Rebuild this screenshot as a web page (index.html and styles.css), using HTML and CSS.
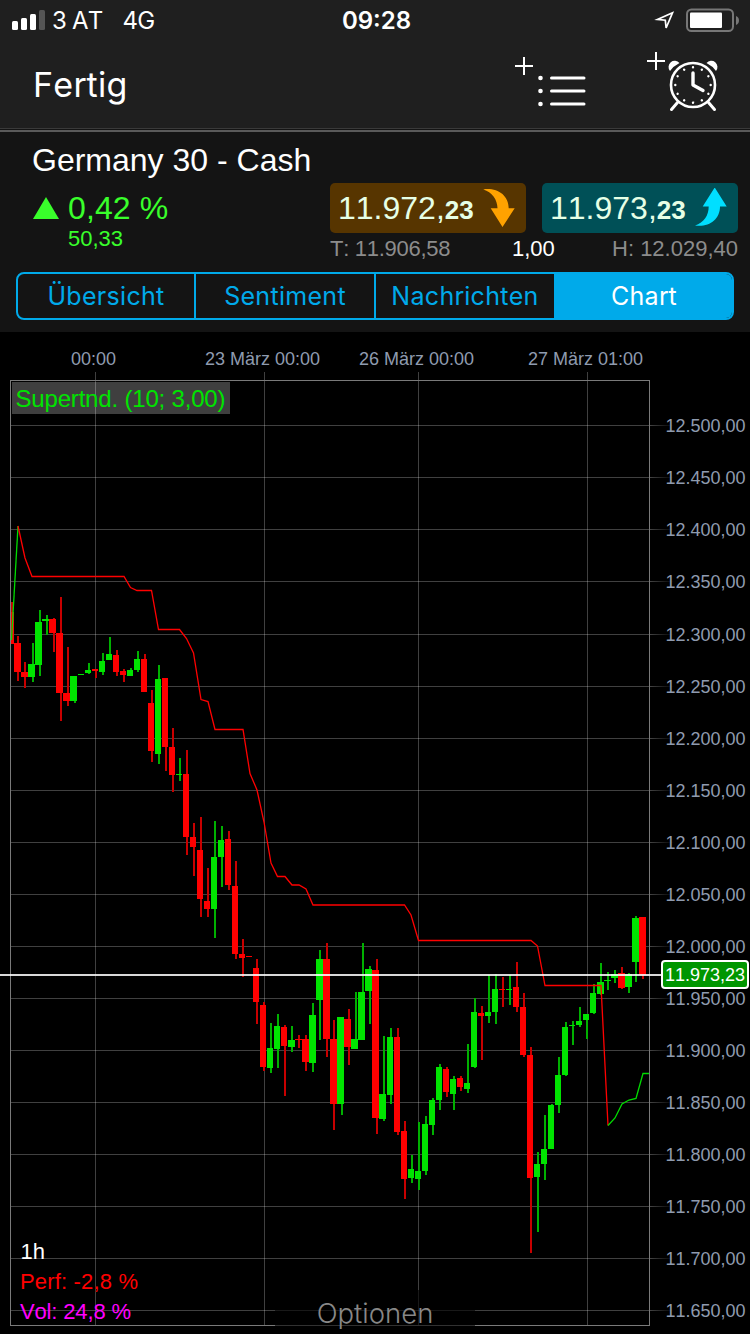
FILE: index.html
```html
<!DOCTYPE html>
<html lang="de">
<head>
    <meta charset="UTF-8">
    <meta name="viewport" content="width=device-width, initial-scale=1.0">
    <title>Germany 30 - Cash</title>
    <link rel="stylesheet" href="styles.css">
</head>
<body>
    <div class="status-bar">
        <div class="status-left">
            <svg class="signal" width="34" height="22" viewBox="0 0 34 22">
                <rect x="0" y="12" width="6" height="9" rx="1.5"/>
                <rect x="9" y="9" width="6" height="12" rx="1.5"/>
                <rect x="18" y="5" width="6" height="16" rx="1.5"/>
                <rect class="off" x="27" y="1" width="6" height="20" rx="1.5"/>
            </svg>
            <span class="carrier">3 AT</span>
            <span class="network">4G</span>
        </div>
        <div class="clock">09:28</div>
        <div class="status-right">
            <svg class="location" width="22" height="22" viewBox="0 0 22 22">
                <path d="M19.5 3.8 4.5 10.4 12.3 11.2 13.1 19Z"/>
            </svg>
            <svg class="battery" width="54" height="24" viewBox="0 0 54 24">
                <rect class="case" x="1" y="1.500" width="46" height="21.5" rx="4.5"/>
                <rect class="level" x="4" y="4.500" width="32" height="15.500" rx="1"/>
                <path class="cap" d="M50 8c4 1.500 4 7.500 0 9z"/>
            </svg>
        </div>
    </div>

    <div class="nav-bar">
        <a class="done" href="#">Fertig</a>
        <div class="nav-icons">
            <svg width="74" height="56" viewBox="513 55 74 56">
                <path class="plus" d="M515 66H533M524 57V75"/>
                <g class="fill"><circle cx="540.5" cy="78" r="2.3"/><circle cx="540.5" cy="91" r="2.3"/><circle cx="540.5" cy="104" r="2.3"/></g>
                <path class="lines" d="M551.500 78H584M551.500 91H584M551.500 104H584"/>
            </svg>
            <svg width="76" height="62" viewBox="645 50 76 62">
                <path class="plus" d="M647 61H665M656 52V70"/>
                <path class="fill" d="M670 71A6 6 0 0 1 679.500 63Q673.500 66 670 71ZM716 71A6 6 0 0 0 706.500 63Q712.500 66 716 71Z"/>
                <circle class="ring" cx="693" cy="85" r="22"/>
                <circle class="ticks" cx="693" cy="85" r="17.700" pathLength="120"/>
                <path class="hands" d="M693 73V85L703 90.500"/>
                <path class="lines" d="M677.500 102.500 671.500 109.500M708.500 102.500 714.500 109.500"/>
            </svg>
        </div>
    </div>

    <div class="instrument">
        <h1>Germany 30 - Cash</h1>
        <div class="quote">
            <div class="change">
                <div class="change-pct">
                    <svg width="26" height="22" viewBox="0 0 26 22"><path d="M13 0 26 22H0z"/></svg>
                    <span>0,42 %</span>
                </div>
                <div class="change-abs">50,33</div>
            </div>
            <div class="deal">
                <div class="deal-buttons">
                    <div class="price sell">
                        <span>11.972,<b>23</b></span>
                        <svg width="32" height="40" viewBox="483 188 32 40"><path d="M483.300 189.400C497 187.500 508.700 195 508.700 208.300H514.700L502.500 227 490.700 208.300H497.500C497.300 199 492 192 483.300 189.400Z"/></svg>
                    </div>
                    <div class="price buy">
                        <span>11.973,<b>23</b></span>
                        <svg width="32" height="40" viewBox="695 187.500 32 40"><path d="M695 225C709 227 720 219 720 206H726.700L714.700 187 702.700 206H708.700C708.700 215 704 222 695 225Z"/></svg>
                    </div>
                </div>
                <div class="range">
                    <span class="low">T: 11.906,58</span>
                    <span class="spread">1,00</span>
                    <span class="high">H: 12.029,40</span>
                </div>
            </div>
        </div>
        <div class="tabs">
            <a href="#">Übersicht</a>
            <a href="#">Sentiment</a>
            <a href="#">Nachrichten</a>
            <a href="#" class="active">Chart</a>
        </div>
    </div>

    <div class="chart">
        <svg id="chart" width="750" height="1002" viewBox="0 332 750 1002">
            <defs>
                <linearGradient id="fade-right"><stop offset="0" stop-color="#444"/><stop offset="1" stop-color="#444" stop-opacity="0"/></linearGradient>
            </defs>
            <rect class="legend-bg" x="12" y="382" width="218" height="32"/>
            <g id="grid"></g>
            <g id="candles"></g>
            <path class="trend-up" d="M11.500 640 18 526"/>
            <path class="trend-down" d="M18 526 25 558 32 576.500H124L130.500 587.500 137 590.500H151.500L158.500 629.500H179.500L186.500 638.500 193.500 653 201 699.500 208 701.500 215 729.500H243L250 773.500 257 790 264 822 271 863 277.500 876.500H285L292 885H299L306 889 313 905H404.500L411 915 418.500 940.500H531L537.500 946 545 985.500H601L608 1125.500"/>
            <path class="trend-up" d="M608 1125.500 615 1118 622 1104 629 1100 636 1098.500 643 1073.500H649"/>
            <rect class="last-line" x="0" y="974" width="661" height="2"/>
            <text class="legend" x="15.500" y="407" textLength="210">Supertnd. (10; 3,00)</text>
            <text class="interval" x="20.500" y="1259">1h</text>
            <text class="perf" x="20" y="1289" textLength="118">Perf: -2,8 %</text>
            <text class="vol" x="20" y="1319" textLength="111">Vol: 24,8 %</text>
            <rect class="tag" x="662" y="961" width="86" height="27" rx="3"/>
            <text class="tag-text" x="665" y="981">11.973,23</text>
        </svg>
        <div class="options">Optionen</div>
    </div>
    <script src="chart.js"></script>
</body>
</html>
```
FILE: styles.css
```css
/* --- General Setup --- */
:root {
    --bar-bg: #1f1f1f;
    --panel-bg: #141414;
    --blue: #00aaea;
    --up: #00e400;
    --down: #ff0000;
    --font-system: Inter, sans-serif;
    --font-data: "Liberation Sans", Arial, sans-serif;
}
* { box-sizing: border-box; }
body {
    margin: 0;
    width: 750px;
    background-color: #000;
    color: #fff;
    font-family: var(--font-data);
    font-kerning: none;
}
a { color: inherit; text-decoration: none; }
svg { display: block; }

/* --- Status Bar --- */
.status-bar {
    display: grid;
    grid-template-columns: 1fr auto 1fr;
    align-items: center;
    height: 40px;
    padding: 0 10px 0 12px;
    background-color: var(--bar-bg);
    font-family: var(--font-system);
    font-size: 24px;
}
.status-left, .status-right { display: flex; align-items: center; }
.status-right { justify-content: flex-end; gap: 11px; }
.signal { fill: #fff; margin-right: 6px; }
.signal .off { fill: #555; }
.carrier { margin-right: 20px; letter-spacing: -0.8px; }
.network { letter-spacing: -0.8px; }
.clock { font-weight: 600; letter-spacing: 0; padding-left: 1px; }
.location { fill: none; stroke: #fff; stroke-width: 1.7; }
.battery .case { fill: none; stroke: #777; stroke-width: 2; }
.battery .level { fill: #fff; }
.battery .cap { fill: #777; }

/* --- Navigation --- */
.nav-bar {
    display: flex;
    justify-content: space-between;
    align-items: flex-start;
    height: 92px;
    padding: 10px 29px 0 33px;
    background: linear-gradient(#141414, #141414) 0 89px / 100% 1px no-repeat, linear-gradient(#3a3a3a, #3a3a3a) 0 88px / 100% 1px no-repeat, var(--bar-bg);
    border-bottom: 2px solid #5a5a5a;
}
.done {
    font-family: var(--font-system);
    font-size: 34px;
    line-height: 70px;
    letter-spacing: 0.3px;
}
.nav-icons { display: flex; align-items: flex-start; gap: 58px; }
.nav-icons svg:first-child { margin-top: 5px; }
.nav-icons svg { fill: none; stroke: #fff; }
.plus { stroke-width: 2; }
.lines { stroke-width: 3; stroke-linecap: round; }
.nav-icons .fill { fill: #fff; stroke: none; }
.ring { stroke-width: 2.6; }
.ticks { stroke-width: 2.4; stroke-dasharray: 0.01 9.99; stroke-linecap: round; }
.hands { stroke-width: 3.4; stroke-linecap: round; stroke-linejoin: round; }

/* --- Instrument Header --- */
.instrument {
    height: 200px;
    padding: 10px 12px 0 16px;
    background-color: var(--panel-bg);
}
h1 {
    margin: 0 0 5px 16px;
    font-size: 32px;
    font-weight: normal;
    line-height: 36px;
}
.quote { display: flex; justify-content: space-between; padding-left: 17px; }
.change { color: #39ff2b; }
.change-pct {
    display: flex;
    align-items: center;
    gap: 9px;
    height: 50px;
    font-size: 32px;
    letter-spacing: 0.1px;
}
.change-pct svg { fill: currentColor; }
.change-abs { padding-left: 35px; font-size: 22px; line-height: 12px; }
.deal { width: 408px; }
.deal-buttons { display: flex; gap: 16px; }
.price {
    display: flex;
    align-items: center;
    justify-content: space-between;
    width: 196px;
    height: 50px;
    padding: 0 11px 0 8px;
    border-radius: 5px;
    color: #e6ffe6;
    font-size: 32px;
}
.price b { font-size: 26px; }
.sell { background-color: #573500; }
.sell svg { fill: #ffa200; }
.buy { background-color: #005057; }
.buy svg { fill: #00dfff; }
.range {
    display: grid;
    grid-template-columns: 182px auto 1fr;
    padding-top: 3px;
    color: #8c8c8c;
    font-size: 22px;
    line-height: 26px;
}
.low { letter-spacing: -0.28px; }
.spread { color: #fff; }
.high { text-align: right; }

.tabs {
    display: grid;
    grid-template-columns: 176px 180px 180px 1fr;
    width: 718px;
    height: 48px;
    margin-top: 10px;
    border: 2px solid var(--blue);
    border-radius: 8px;
    overflow: hidden;
    color: var(--blue);
    font-family: var(--font-system);
    font-size: 25px;
    line-height: 45px;
    text-align: center;
    letter-spacing: 0.3px;
}
.tabs a + a { border-left: 2px solid var(--blue); }
.tabs .active { background-color: var(--blue); color: #fff; }

/* --- Chart --- */
.chart { position: relative; height: 1002px; }
.chart text { font-family: var(--font-data); font-size: 22px; }
.chart .axis { fill: #8f9baf; font-size: 18px; }
.grid-line { fill: #fff; fill-opacity: 0.25; }
.frame { fill: #7a7a7a; }
.up { fill: var(--up); }
.down { fill: var(--down); }
.wick-up { fill: #00b000; }
.wick-down { fill: #c80000; }
.trend-up, .trend-down { fill: none; stroke-width: 1.3; }
.trend-up { stroke: #00dc00; }
.trend-down { stroke: #f00; }
.last-line { fill: #fff; fill-opacity: 0.85; }
.legend-bg { fill: #3f3f3f; }
.chart .legend { fill: #00e400; font-size: 24px; }
.interval { fill: #fff; }
.perf { fill: #f00; }
.vol { fill: #f0f; }
.tag { fill: #009600; stroke: #fff; stroke-width: 2; }
.chart .tag-text { fill: #fff; font-size: 18px; }
.options {
    position: absolute;
    left: 275px;
    bottom: 0;
    width: 200px;
    height: 44px;
    background-color: rgba(0, 0, 0, 0.6);
    color: #888;
    font-family: var(--font-system);
    font-size: 27.5px;
    font-weight: 300;
    line-height: 47px;
    text-align: center;
}
```
FILE: chart.js
```js
const SVG_NS = 'http://www.w3.org/2000/svg';
const grid = document.getElementById('grid');
const candles = document.getElementById('candles');

function rect(parent, cls, x, y, w, h) {
    const el = document.createElementNS(SVG_NS, 'rect');
    el.setAttribute('class', cls);
    el.setAttribute('x', x);
    el.setAttribute('y', y);
    el.setAttribute('width', w);
    el.setAttribute('height', h);
    parent.appendChild(el);
    return el;
}

function label(text, x, y, anchor) {
    const el = document.createElementNS(SVG_NS, 'text');
    el.setAttribute('class', 'axis');
    el.setAttribute('x', x);
    el.setAttribute('y', y);
    el.setAttribute('text-anchor', anchor);
    el.textContent = text;
    grid.appendChild(el);
}

// price axis
const rows = [425, 477, 529, 581, 634, 686, 738, 790, 842, 894, 946, 998, 1050, 1102, 1154, 1206, 1258, 1310];
rows.forEach((y, i) => {
    const price = 12500 - i * 50;
    rect(grid, 'grid-line', 11, y, 638, 1);
    rect(grid, 'tail', 650, y, 24, 1).setAttribute('fill', 'url(#fade-right)');
    label(Math.floor(price / 1000) + '.' + String(price % 1000).padStart(3, '0') + ',00', 745.5, y + 7, 'end');
});

// time axis
[[95, 93.5, '00:00'], [264, 262.5, '23 März 00:00'], [418, 416.5, '26 März 00:00'], [587, 585.5, '27 März 01:00']].forEach(([x, tx, t]) => {
    rect(grid, 'grid-line', x, 372, 1, 953);
    label(t, tx, 365, 'middle');
});

// plot frame
rect(grid, 'frame', 10, 380, 640, 1);
rect(grid, 'frame', 10, 1325, 640, 1);
rect(grid, 'frame', 10, 381, 1, 944);
rect(grid, 'frame', 649, 381, 1, 944);

// x, width, body top, body bottom, wick x, wick top, wick bottom, up
const data = [
    [11,3,612,644,11,602,644,0],[14,7,643,672,17,636,681,0],[21,7,672,677,24,662,688,0],[28,7,664,677,32,643,682,1],
    [35,7,622,665,39,610,676,1],[42,7,619,621,46,615,635,1],[49,7,619,633,53,618,652,0],[56,7,633,693,60,597,721,0],
    [63,7,693,701,67,647,706,0],[70,7,676,701,74,676,703,1],[78,6,674,675,81,674,675,1],[85,6,670,673,88,663,674,1],
    [92,6,669,671,95,669,678,0],[99,6,661,672,102,653,675,1],[106,6,654,660,109,637,660,1],[113,6,655,672,116,650,676,0],
    [120,6,671,675,123,669,682,0],[127,6,670,676,130,668,676,1],[134,6,659,670,137,651,672,1],[141,6,659,692,144,654,692,0],
    [148,6,703,751,151,690,762,0],[155,6,679,754,158,665,764,1],[162,6,678,747,165,678,771,0],[169,6,747,775,172,728,792,0],
    [176,6,774,775,179,758,781,1],[183,6,774,837,186,750,855,0],[190,6,837,847,193,823,876,0],[197,6,850,899,200,817,917,0],
    [204,6,901,909,207,868,917,0],[211,6,857,909,214,821,938,1],[218,6,840,857,221,826,887,1],[225,6,839,885,228,831,890,0],
    [232,6,886,954,235,861,959,0],[239,6,954,958,242,939,977,0],[246,6,956,957,249,956,957,0],[253,6,968,1002,256,959,1024,0],
    [260,6,1005,1067,263,1002,1071,0],[267,6,1048,1068,270,1023,1073,1],[274,6,1026,1049,277,1014,1068,1],[281,6,1027,1046,284,1025,1096,0],
    [288,7,1040,1047,291,1026,1052,1],[295,7,1039,1040,298,1035,1048,0],[302,7,1039,1062,305,1035,1071,0],[309,7,1015,1063,312,1003,1072,1],
    [316,7,959,1000,319,950,1040,1],[323,7,959,1039,326,943,1057,0],[330,7,1039,1104,333,1020,1130,0],[337,7,1017,1104,341,1017,1115,1],
    [344,7,1019,1047,348,1009,1065,0],[351,7,1039,1049,355,992,1049,1],[358,7,992,1040,362,943,1040,1],[365,7,969,991,369,966,1024,1],
    [372,7,970,1118,376,959,1134,0],[379,7,1094,1119,383,1036,1121,1],[387,6,1037,1095,390,1028,1104,1],[394,6,1037,1132,397,1028,1135,0],
    [401,6,1131,1179,404,1121,1199,0],[408,6,1169,1178,411,1155,1183,1],[415,6,1171,1179,418,1122,1190,1],[422,6,1124,1171,425,1116,1175,1],
    [429,6,1100,1125,432,1098,1135,1],[436,6,1067,1100,439,1064,1110,1],[443,6,1069,1092,446,1067,1097,0],[450,6,1079,1094,453,1076,1110,1],
    [457,6,1078,1087,460,1076,1091,0],[464,6,1083,1089,467,1044,1093,1],[471,6,1012,1067,474,998,1068,1],[478,6,1013,1016,481,1006,1060,0],
    [485,6,1012,1016,488,975,1023,1],[492,6,989,1012,495,974,1024,1],[499,6,989,990,502,977,1007,0],[506,6,989,990,509,975,1005,1],
    [513,6,987,1007,516,962,1012,0],[520,6,1007,1055,523,993,1057,0],[527,6,1055,1178,530,1047,1253,0],[534,6,1164,1177,537,1152,1232,1],
    [541,6,1149,1164,544,1115,1180,1],[548,6,1105,1149,551,1104,1149,1],[555,6,1075,1105,558,1057,1113,1],[562,6,1027,1075,565,1022,1076,1],
    [569,6,1025,1026,572,1021,1045,1],[576,6,1021,1025,579,1007,1027,1],[583,6,1014,1020,586,1014,1039,1],[590,6,993,1013,593,984,1014,1],
    [597,7,982,994,600,963,995,1],[604,7,980,981,607,972,990,1],[611,7,974,978,614,970,983,1],[618,7,973,988,621,967,989,0],
    [625,7,974,987,628,973,993,1],[632,7,918,962,635,916,982,1],[639,7,917,975,642,917,979,0]
];
data.forEach(([x, w, top, bottom, wx, high, low, up]) => {
    rect(candles, up ? 'wick-up' : 'wick-down', wx, high, 2, low - high);
    rect(candles, up ? 'up' : 'down', x, top, w, bottom - top);
});
```
